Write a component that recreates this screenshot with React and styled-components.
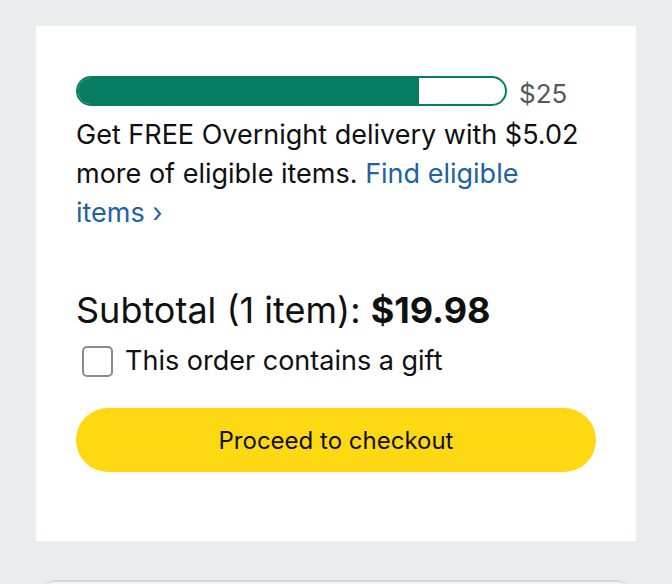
import React from "react";
import styled, { createGlobalStyle } from "styled-components";

const Global = createGlobalStyle`
  html, body { margin: 0; padding: 0; background: #EAEDED; overflow: hidden; }
  body { font-family: Inter, "Noto Sans", "Liberation Sans", sans-serif; color: #0F1111; }
`;

const Page = styled.div`
  padding: 26px 36px 0;
  height: 584px;
  box-sizing: border-box;
  overflow: hidden;
`;

const Card = styled.section`
  background: #ffffff;
  padding: 50px 40px 69px;
  display: flex;
  flex-direction: column;
`;

const BarRow = styled.div`
  display: flex;
  align-items: flex-start;
  gap: 12px;
`;

const Track = styled.div`
  width: 431px;
  height: 30px;
  box-sizing: border-box;
  border: 2px solid #067D62;
  border-radius: 15px;
  overflow: hidden;
  display: flex;
`;

const Fill = styled.div`
  background: #067D62;
  height: 100%;
`;

const Goal = styled.span`
  font-size: 26px;
  color: #565959;
  line-height: 36px;
`;

const Message = styled.p`
  margin: 3px 0 0;
  font-size: 27px;
  line-height: 39px;
  color: #0F1111;
`;

const Link = styled.a`
  color: #2162A1;
  text-decoration: none;
`;

const Subtotal = styled.div`
  margin-top: 56px;
  font-size: 36px;
  line-height: 44px;
  color: #0F1111;
`;

const Price = styled.span`
  font-weight: 700;
`;

const GiftRow = styled.label`
  display: flex;
  align-items: center;
  gap: 12px;
  margin-top: 11px;
  padding-left: 6px;
  font-size: 27px;
  line-height: 36px;
`;

const Box = styled.span`
  width: 31px;
  height: 31px;
  box-sizing: border-box;
  border: 2px solid #888C8C;
  border-radius: 5px;
  background: #fff;
`;

const Checkout = styled.button`
  margin-top: 29px;
  height: 64px;
  border: none;
  border-radius: 32px;
  background: #FFD814;
  color: #0F1111;
  font-family: inherit;
  font-size: 24px;
  cursor: pointer;
`;

const NextCard = styled.div`
  margin: 39px 8px 0;
  height: 20px;
  background: #F3F4F4;
  border-top: 2px solid #D5D9D9;
  border-radius: 10px 10px 0 0;
`;

export default function App() {
  const subtotal = 19.98;
  const goal = 25;
  const pct = (subtotal / goal) * 100;
  return (
    <>
      <Global />
      <Page>
        <Card>
          <BarRow>
            <Track>
              <Fill style={{ width: `${pct}%` }} />
            </Track>
            <Goal>$25</Goal>
          </BarRow>
          <Message>
            Get FREE Overnight delivery with $5.02 more of eligible items.{" "}
            <Link href="#">Find eligible items{"\u00a0"}›</Link>
          </Message>
          <Subtotal>
            Subtotal (1 item): <Price>$19.98</Price>
          </Subtotal>
          <GiftRow>
            <Box />
            This order contains a gift
          </GiftRow>
          <Checkout>Proceed to checkout</Checkout>
        </Card>
        <NextCard />
      </Page>
    </>
  );
}
